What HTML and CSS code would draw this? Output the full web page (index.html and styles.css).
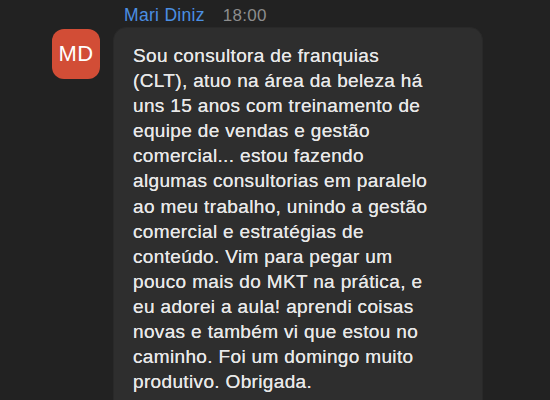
FILE: index.html
```html
<!DOCTYPE html>
<html lang="pt-br">
<head>
    <meta charset="UTF-8">
    <meta name="viewport" content="width=device-width, initial-scale=1.0">
    <title>Mari Diniz</title>
    <link rel="stylesheet" href="styles.css">
</head>
<body>
    <div class="chat">
        <div class="message">
            <div class="avatar">MD</div>
            <div class="message-body">
                <div class="meta">
                    <span class="author">Mari Diniz</span>
                    <span class="time">18:00</span>
                </div>
                <div class="bubble">
                    Sou consultora de franquias<br>
                    (CLT), atuo na área da beleza há<br>
                    uns 15 anos com treinamento de<br>
                    equipe de vendas e gestão<br>
                    comercial... estou fazendo<br>
                    algumas consultorias em paralelo<br>
                    ao meu trabalho, unindo a gestão<br>
                    comercial e estratégias de<br>
                    conteúdo. Vim para pegar um<br>
                    pouco mais do MKT na prática, e<br>
                    eu adorei a aula! aprendi coisas<br>
                    novas e também vi que estou no<br>
                    caminho. Foi um domingo muito<br>
                    produtivo. Obrigada.
                </div>
            </div>
        </div>
    </div>
</body>
</html>
```

FILE: styles.css
```css
body, html {
    font-family: 'Liberation Sans', Arial, sans-serif;
    margin: 0;
    padding: 0;
    height: 100%;
    overflow: hidden;
    background-color: #222222;
    color: #e8e8e8;
}
.chat {
    padding: 3px 0 0 52px;
}
.message {
    display: flex;
    gap: 13px;
}
.avatar {
    flex: none;
    width: 48px;
    height: 50px;
    margin-top: 26px;
    border-radius: 12px;
    background-color: #d24d36;
    color: #fff;
    font-size: 22px;
    display: flex;
    align-items: center;
    justify-content: center;
    letter-spacing: 0.5px;
}
.message-body {
    display: flex;
    flex-direction: column;
}
.meta {
    display: flex;
    align-items: baseline;
    gap: 18px;
    padding: 2px 0 0 11px;
    height: 22px;
    font-size: 17.5px;
    letter-spacing: 0.3px;
}
.author {
    color: #4b8fe3;
}
.time {
    color: #8d8d8d;
    font-size: 17px;
}
.bubble {
    width: 329px;
    padding: 15px 20px 20px 19px;
    background-color: #2e2e2e;
    border: 1px solid #292929;
    border-radius: 13px;
    font-size: 19px;
    line-height: 25.1px;
    letter-spacing: 0.35px;
    text-shadow: 0 0 0.4px #e8e8e8;
}
```
